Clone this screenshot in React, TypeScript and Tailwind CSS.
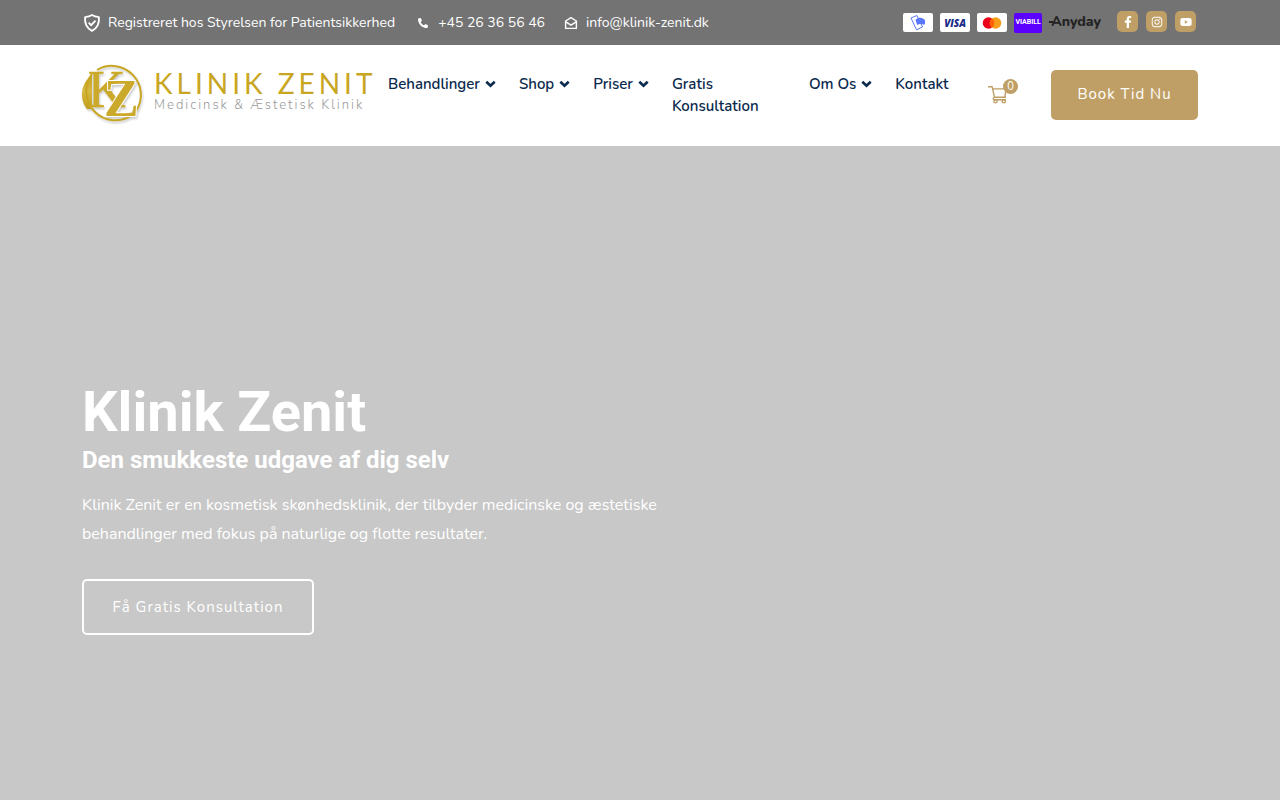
import React from 'react';
import { FaFacebookF, FaInstagram, FaPhone, FaYoutube } from 'react-icons/fa';

interface NavItem {
  label: string;
  hasMenu?: boolean;
  wrap?: boolean;
}

const navItems: NavItem[] = [
  { label: 'Behandlinger', hasMenu: true },
  { label: 'Shop', hasMenu: true },
  { label: 'Priser', hasMenu: true },
  { label: 'Gratis Konsultation', wrap: true },
  { label: 'Om Os', hasMenu: true },
  { label: 'Kontakt' },
];

const socials = [
  { name: 'Facebook', icon: FaFacebookF },
  { name: 'Instagram', icon: FaInstagram },
  { name: 'YouTube', icon: FaYoutube },
];

const ShieldIcon: React.FC = () => (
  <svg width="20" height="20" viewBox="0 0 24 24" fill="none" stroke="currentColor" strokeWidth="2.2" aria-hidden="true">
    <path d="M12 2.5c2.4 1.7 5.2 2.3 8.3 2.4.7 7.4-2 13.2-8.3 16.6C5.7 18.1 3 12.3 3.7 4.9 6.8 4.8 9.6 4.2 12 2.5Z" strokeLinejoin="round" />
    <path d="m8 11.5 3 3 5.2-5.4" />
  </svg>
);

const MailIcon: React.FC = () => (
  <svg width="14" height="14" viewBox="0 0 14 14" fill="none" stroke="currentColor" strokeWidth="1.4" aria-hidden="true">
    <path d="M1.6 5 7 1.6 12.4 5v7.4H1.6Z" strokeLinejoin="round" />
    <path d="m1.8 5.8 5.2 3.4 5.2-3.4" />
  </svg>
);

const ChevronIcon: React.FC = () => (
  <svg width="11" height="8" viewBox="0 0 11 8" fill="none" stroke="currentColor" strokeWidth="2.6" aria-hidden="true">
    <path d="M1.3 1.7 5.5 5.8 9.7 1.7" />
  </svg>
);

const CartIcon: React.FC = () => (
  <svg width="22" height="19" viewBox="0 0 22 19" fill="none" stroke="currentColor" strokeWidth="1.4" aria-hidden="true">
    <path d="M0 1.7h4.1L6.5 12.3H18M4.7 3.9h13.3L16.8 12.3M6.4 12.3c-1.6.6-1.5 2.5.2 2.5H18" />
    <circle cx="7.5" cy="16.3" r="1.6" />
    <circle cx="15.8" cy="16.3" r="1.6" />
  </svg>
);

const Emblem: React.FC = () => (
  <svg
    width="62"
    height="62"
    viewBox="0 0 62 62"
    aria-hidden="true"
    className="shrink-0 overflow-visible drop-shadow-[1px_2px_1px_rgba(0,0,0,0.2)]"
  >
    <defs>
      <linearGradient id="gold" x1="0" y1="0" x2="0" y2="1">
        <stop offset="0" stopColor="#c4a01c" />
        <stop offset="0.5" stopColor="#d6b944" />
        <stop offset="1" stopColor="#c09c18" />
      </linearGradient>
    </defs>
    <path d="M10 10C-2 21-3 35 5 45H10Z" fill="url(#gold)" />
    <path d="M15 6A29 29 0 0 1 54 47" fill="none" stroke="#c9a622" strokeWidth="2" />
    <path d="M50 51A29 29 0 0 1 10 10" fill="none" stroke="#c9a622" strokeWidth="2" />
    <text x="6" y="43" fontFamily="'Liberation Serif', serif" fontSize="52" fill="#cba92a">
      <tspan stroke="#cba92a" strokeWidth="0.6">K</tspan>
      <tspan x="22" y="52" fontWeight="700" stroke="#fff" strokeWidth="2" paintOrder="stroke">
        Z
      </tspan>
    </text>
  </svg>
);

const Logo: React.FC = () => (
  <a href="#" className="flex w-[290px] shrink-0 items-center gap-2.5">
    <Emblem />
    <span className="flex flex-col pb-1.5 whitespace-nowrap">
      <span className="font-['Lato'] text-[28px] leading-[26px] tracking-[4px] text-[#c9a622]">KLINIK ZENIT</span>
      <span className="text-[13px] leading-[18px] font-light tracking-[2px] text-[#9a9a9a]">Medicinsk &amp; Æstetisk Klinik</span>
    </span>
  </a>
);

const Payments: React.FC = () => (
  <div className="flex items-center gap-[7px]">
    <span className="flex h-[19px] w-[30px] items-center justify-center rounded-xs bg-white">
      <svg width="18" height="17" viewBox="0 0 18 17" aria-label="MobilePay">
        <path d="m2 4 6-2.5L13.5 13l-6 2.8Z" fill="#fff" stroke="#5a78ff" strokeWidth="1" strokeLinejoin="round" />
        <path d="M6.5 6C8.5 3.3 12 3 15 5.2v5.6c-2-1.3-5-1.2-6.8.2Z" fill="#5a78ff" />
        <path d="M15 5.2 16 6v4l-1 .8Z" fill="#5a78ff" />
      </svg>
    </span>
    <span className="flex h-[19px] w-[30px] items-center justify-center rounded-xs bg-white font-['Open_Sans'] text-[10px] leading-none font-extrabold text-[#1a2b88] italic">
      VISA
    </span>
    <span className="flex h-[19px] w-[30px] items-center justify-center rounded-xs bg-white">
      <svg width="20" height="12" viewBox="0 0 20 12" aria-label="Mastercard">
        <circle cx="6.5" cy="6" r="5.8" fill="#eb001b" />
        <circle cx="13.5" cy="6" r="5.8" fill="#f79e1b" />
        <path d="M10 1.4a5.8 5.8 0 0 1 0 9.2 5.8 5.8 0 0 1 0-9.2Z" fill="#ff5f00" />
      </svg>
    </span>
    <span className="flex h-5 w-7 items-center justify-center rounded-xs bg-[#5b00ff] font-['Roboto'] text-[7px] leading-none font-bold text-white">
      VIABILL
    </span>
    <span className="flex items-center pb-0.5 text-[14px] leading-5 font-extrabold text-[#222]">
      <span className="-mr-0.5 h-0.5 w-1 bg-[#222]" />
      Anyday
    </span>
  </div>
);

const TopBar: React.FC = () => (
  <div className="bg-[#737373] text-white">
    <div className="mx-auto flex h-[45px] max-w-[1140px] items-center justify-between px-3">
      <div className="flex items-center gap-[23px] text-[14px] whitespace-nowrap">
        <span className="flex items-center gap-1.5">
          <ShieldIcon />
          Registreret hos Styrelsen for Patientsikkerhed
        </span>
        <a href="tel:+4526365646" className="flex items-center gap-2.5">
          <FaPhone size={10} className="-scale-x-100" />
          +45 26 36 56 46
        </a>
        <a href="mailto:info@klinik-zenit.dk" className="-ml-1 flex items-center gap-2">
          <MailIcon />
          info@klinik-zenit.dk
        </a>
      </div>
      <div className="flex items-center gap-4 pr-0.5">
        <Payments />
        <div className="flex gap-2 pb-0.5">
          {socials.map(({ name, icon: Icon }) => (
            <a key={name} href="#" aria-label={name} className="flex size-[21px] items-center justify-center rounded-[5px] bg-[#bf9f65]">
              <Icon size={12} />
            </a>
          ))}
        </div>
      </div>
    </div>
  </div>
);

const Header: React.FC = () => (
  <header className="bg-white">
    <div className="mx-auto flex h-[101px] max-w-[1140px] items-center px-3 pb-0.5">
      <Logo />
      <nav className="ml-4 flex flex-1 items-start gap-[23px] text-[15px] leading-[22px] font-semibold text-[#0a2a4d]">
        {navItems.map((item) => (
          <a key={item.label} href="#" className={item.wrap ? 'w-[114px]' : 'flex items-center gap-[5px] whitespace-nowrap'}>
            {item.label}
            {item.hasMenu && <ChevronIcon />}
          </a>
        ))}
      </nav>
      <a href="#" aria-label="Kurv" className="relative mr-[41px] shrink-0 text-[#bf9f65]">
        <CartIcon />
        <span className="absolute -top-1.5 left-[15px] flex size-[15px] items-center justify-center rounded-full bg-[#bf9f65] text-[11px] leading-none text-white">
          0
        </span>
      </a>
      <button className="h-[50px] w-[147px] shrink-0 rounded-[5px] bg-[#bf9f65] text-[15px] tracking-[1px] text-white">
        Book Tid Nu
      </button>
    </div>
  </header>
);

const Hero: React.FC = () => (
  <main className="flex flex-1 items-center bg-[#c8c8c8] pt-[69px] text-white">
    <div className="mx-auto w-full max-w-[1140px] px-3">
      <h1 className="font-['Roboto'] text-[56px] leading-[64px] font-bold">Klinik Zenit</h1>
      <h2 className="font-['Roboto'] text-2xl leading-8 font-bold">Den smukkeste udgave af dig selv</h2>
      <p className="mt-[15px] max-w-[620px] text-base leading-[29px]">
        Klinik Zenit er en kosmetisk skønhedsklinik, der tilbyder medicinske og æstetiske behandlinger med fokus på
        naturlige og flotte resultater.
      </p>
      <button className="mt-[30px] h-14 w-[232px] rounded-[5px] border-2 border-white text-[15px] tracking-[1px]">
        Få Gratis Konsultation
      </button>
    </div>
  </main>
);

const App: React.FC = () => (
  <div className="flex min-h-screen flex-col font-['Nunito','Lato',sans-serif]">
    <TopBar />
    <Header />
    <Hero />
  </div>
);

export default App;
